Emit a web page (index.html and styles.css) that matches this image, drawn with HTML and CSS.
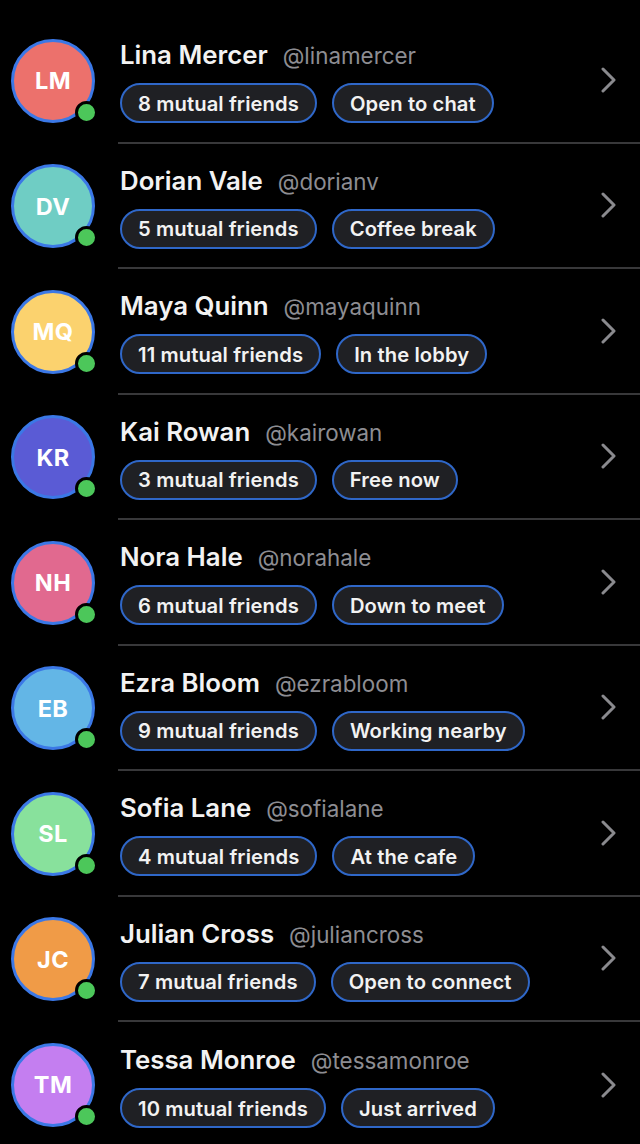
FILE: index.html
```html
<!DOCTYPE html>
<html lang="en">
<head>
  <meta charset="UTF-8">
  <meta name="viewport" content="width=device-width, initial-scale=1.0">
  <title>People nearby</title>
  <link rel="stylesheet" href="styles.css">
</head>
<body>
  <ul class="people">
    <li class="person">
      <div class="avatar avatar--coral">LM<span class="status"></span></div>
      <div class="info">
        <div class="text">
          <p class="title"><span class="name">Lina Mercer</span><span class="handle">@linamercer</span></p>
          <div class="chips"><span class="chip">8 mutual friends</span><span class="chip">Open to chat</span></div>
        </div>
        <svg class="chevron" viewBox="0 0 16 26"><path d="M2 2l11 11L2 24" /></svg>
      </div>
    </li>
    <li class="person">
      <div class="avatar avatar--teal">DV<span class="status"></span></div>
      <div class="info">
        <div class="text">
          <p class="title"><span class="name">Dorian Vale</span><span class="handle">@dorianv</span></p>
          <div class="chips"><span class="chip">5 mutual friends</span><span class="chip">Coffee break</span></div>
        </div>
        <svg class="chevron" viewBox="0 0 16 26"><path d="M2 2l11 11L2 24" /></svg>
      </div>
    </li>
    <li class="person">
      <div class="avatar avatar--yellow">MQ<span class="status"></span></div>
      <div class="info">
        <div class="text">
          <p class="title"><span class="name">Maya Quinn</span><span class="handle">@mayaquinn</span></p>
          <div class="chips"><span class="chip">11 mutual friends</span><span class="chip">In the lobby</span></div>
        </div>
        <svg class="chevron" viewBox="0 0 16 26"><path d="M2 2l11 11L2 24" /></svg>
      </div>
    </li>
    <li class="person">
      <div class="avatar avatar--indigo">KR<span class="status"></span></div>
      <div class="info">
        <div class="text">
          <p class="title"><span class="name">Kai Rowan</span><span class="handle">@kairowan</span></p>
          <div class="chips"><span class="chip">3 mutual friends</span><span class="chip">Free now</span></div>
        </div>
        <svg class="chevron" viewBox="0 0 16 26"><path d="M2 2l11 11L2 24" /></svg>
      </div>
    </li>
    <li class="person">
      <div class="avatar avatar--pink">NH<span class="status"></span></div>
      <div class="info">
        <div class="text">
          <p class="title"><span class="name">Nora Hale</span><span class="handle">@norahale</span></p>
          <div class="chips"><span class="chip">6 mutual friends</span><span class="chip">Down to meet</span></div>
        </div>
        <svg class="chevron" viewBox="0 0 16 26"><path d="M2 2l11 11L2 24" /></svg>
      </div>
    </li>
    <li class="person">
      <div class="avatar avatar--sky">EB<span class="status"></span></div>
      <div class="info">
        <div class="text">
          <p class="title"><span class="name">Ezra Bloom</span><span class="handle">@ezrabloom</span></p>
          <div class="chips"><span class="chip">9 mutual friends</span><span class="chip">Working nearby</span></div>
        </div>
        <svg class="chevron" viewBox="0 0 16 26"><path d="M2 2l11 11L2 24" /></svg>
      </div>
    </li>
    <li class="person">
      <div class="avatar avatar--green">SL<span class="status"></span></div>
      <div class="info">
        <div class="text">
          <p class="title"><span class="name">Sofia Lane</span><span class="handle">@sofialane</span></p>
          <div class="chips"><span class="chip">4 mutual friends</span><span class="chip">At the cafe</span></div>
        </div>
        <svg class="chevron" viewBox="0 0 16 26"><path d="M2 2l11 11L2 24" /></svg>
      </div>
    </li>
    <li class="person">
      <div class="avatar avatar--orange">JC<span class="status"></span></div>
      <div class="info">
        <div class="text">
          <p class="title"><span class="name">Julian Cross</span><span class="handle">@juliancross</span></p>
          <div class="chips"><span class="chip">7 mutual friends</span><span class="chip">Open to connect</span></div>
        </div>
        <svg class="chevron" viewBox="0 0 16 26"><path d="M2 2l11 11L2 24" /></svg>
      </div>
    </li>
    <li class="person">
      <div class="avatar avatar--purple">TM<span class="status"></span></div>
      <div class="info">
        <div class="text">
          <p class="title"><span class="name">Tessa Monroe</span><span class="handle">@tessamonroe</span></p>
          <div class="chips"><span class="chip">10 mutual friends</span><span class="chip">Just arrived</span></div>
        </div>
        <svg class="chevron" viewBox="0 0 16 26"><path d="M2 2l11 11L2 24" /></svg>
      </div>
    </li>
  </ul>
</body>
</html>
```

FILE: styles.css
```css
/* Page */
body {
  margin: 0;
  background: #000;
  color: #f2f2f2;
  font-family: Inter, "Liberation Sans", sans-serif;
  overflow: hidden;
}

.people {
  list-style: none;
  margin: 0;
  padding: 18px 0 0;
}

/* One row */
.person {
  display: flex;
  align-items: center;
  height: 125.5px;
  padding-left: 11px;
}

.avatar {
  position: relative;
  flex: none;
  width: 84px;
  height: 84px;
  box-sizing: border-box;
  border: 3px solid #3b78e6;
  border-radius: 50%;
  display: flex;
  align-items: center;
  justify-content: center;
  font-size: 23.5px;
  font-weight: 700;
  color: #fff;
  letter-spacing: 0.4px;
}

.avatar--coral { background: #ec716c; }
.avatar--teal { background: #6fcdc4; }
.avatar--yellow { background: #fbd26e; }
.avatar--indigo { background: #5a5bd5; }
.avatar--pink { background: #e1698f; }
.avatar--sky { background: #63b6e6; }
.avatar--green { background: #88e19c; }
.avatar--orange { background: #f09b47; }
.avatar--purple { background: #c47ef0; }

/* Online dot */
.status {
  position: absolute;
  right: -6px;
  bottom: -4px;
  width: 17px;
  height: 17px;
  border-radius: 50%;
  background: #4cc75a;
  border: 3px solid #000;
}

.info {
  flex: 1;
  align-self: stretch;
  display: flex;
  align-items: center;
  margin-left: 23px;
  padding-left: 2px;
  border-bottom: 2px solid #38383a;
}

.person:last-child .info {
  border-bottom: none;
}

.text {
  flex: 1;
  padding-top: 3px;
}

.title {
  margin: 0 0 9px;
  line-height: 32px;
  white-space: nowrap;
}

.name {
  font-size: 25.8px;
  font-weight: 600;
  color: #f2f2f2;
}

.handle {
  margin-left: 15px;
  font-size: 22.4px;
  color: #8d8d92;
}

.chips {
  display: flex;
  gap: 15px;
}

.chip {
  height: 40px;
  box-sizing: border-box;
  display: inline-flex;
  align-items: center;
  padding: 0 16px;
  border: 2px solid #2f67c8;
  border-radius: 20px;
  background: #1f2024;
  font-size: 20.2px;
  font-weight: 600;
  letter-spacing: 0.1px;
  color: #f2f2f2;
}

.chevron {
  flex: none;
  width: 16px;
  height: 26px;
  margin-right: 23px;
  fill: none;
  stroke: #8a8a8e;
  stroke-width: 3;
  stroke-linecap: round;
  stroke-linejoin: round;
}
```
